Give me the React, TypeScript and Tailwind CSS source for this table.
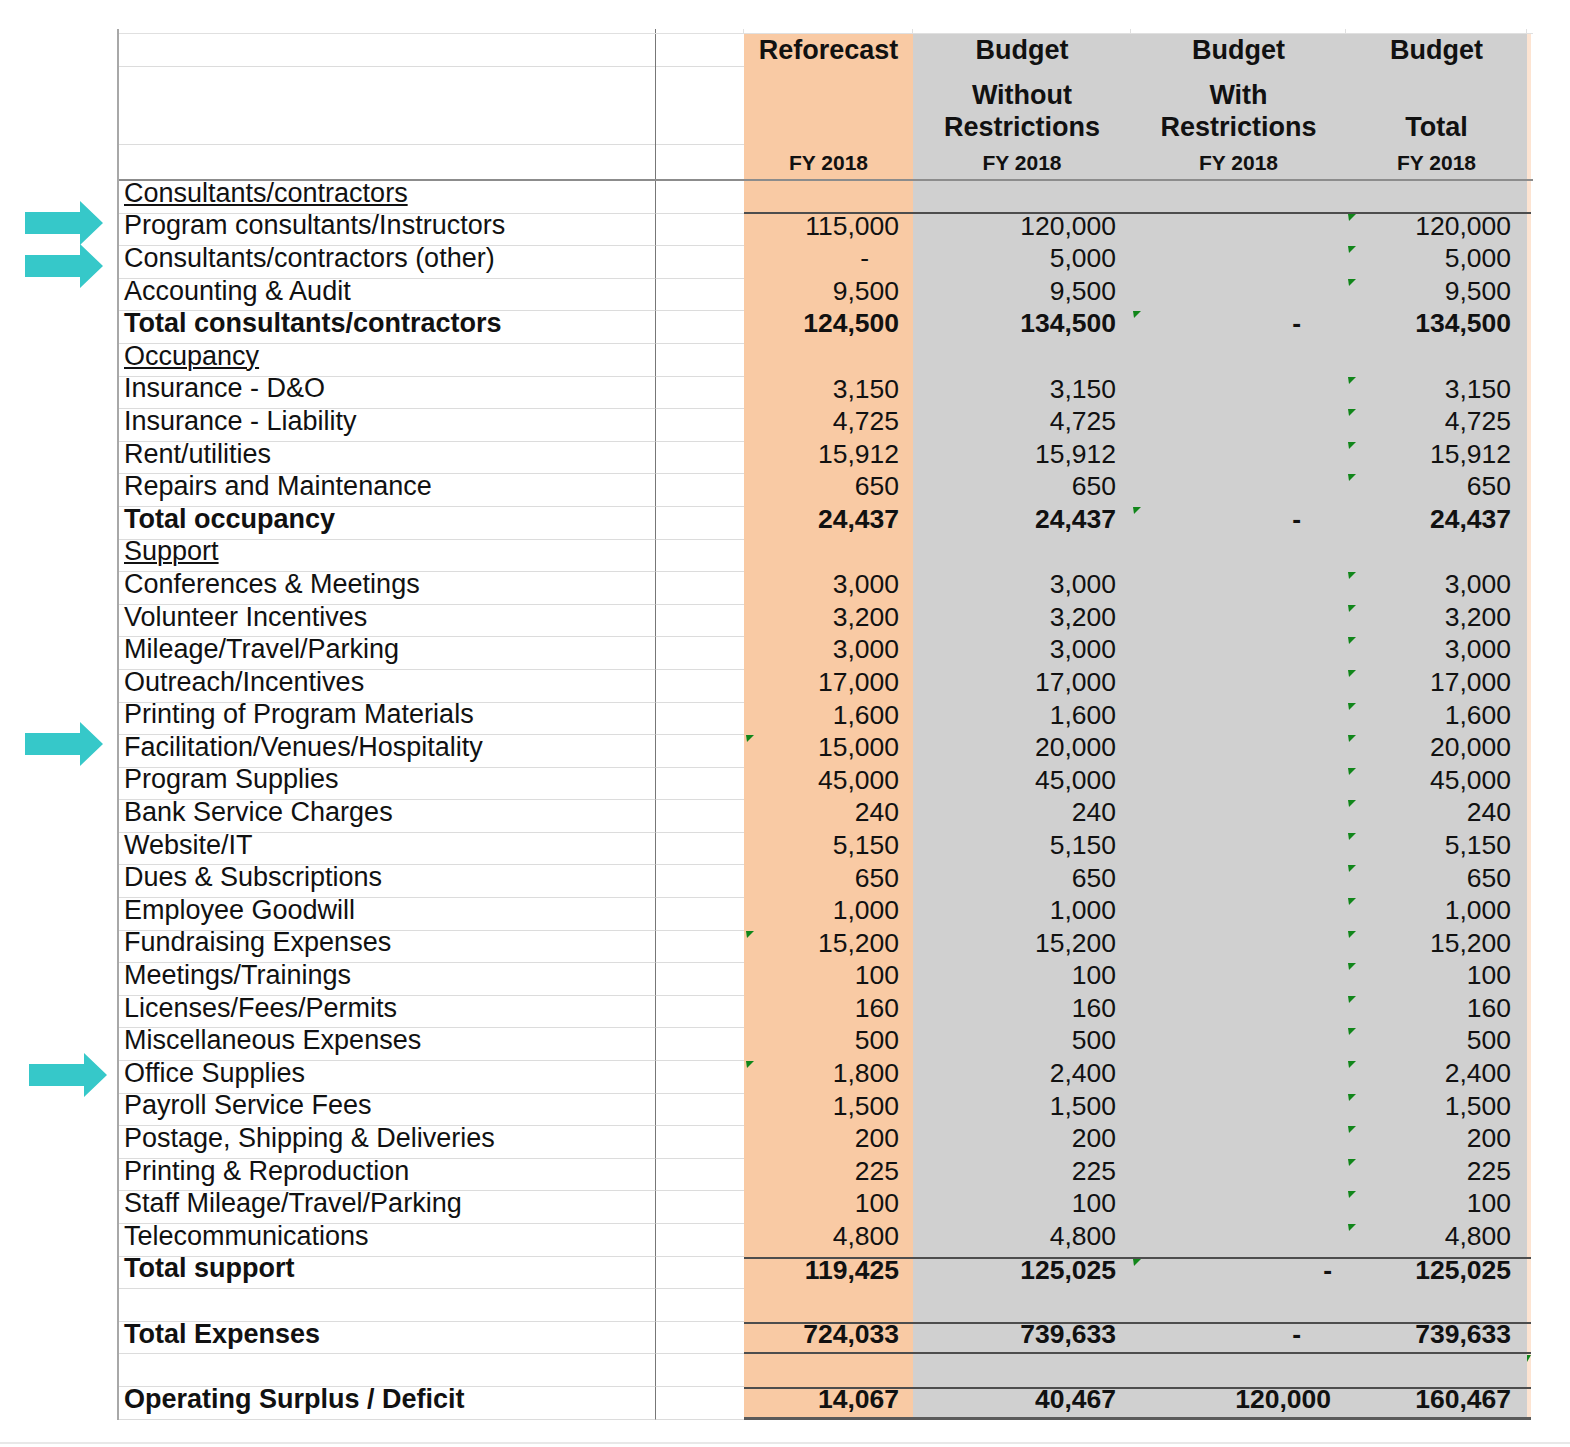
import React from "react";

type Row = {
  label?: string;
  kind?: "section" | "item" | "total" | "blank";
  r?: string;
  w?: string;
  d?: string;
  dPad?: string;
  t?: string;
  tri?: string[];
  topLine?: boolean;
  bottomLine?: boolean;
  bottomThick?: boolean;
};

const item = (label: string, r: string, w: string, t: string, tri: string[] = ["t"]): Row => ({
  label,
  kind: "item",
  r,
  w,
  t,
  tri,
});

const rows: Row[] = [
  { label: "Consultants/contractors", kind: "section", bottomLine: true },
  item("Program consultants/Instructors", "115,000", "120,000", "120,000"),
  item("Consultants/contractors (other)", "-", "5,000", "5,000"),
  item("Accounting & Audit", "9,500", "9,500", "9,500"),
  { label: "Total consultants/contractors", kind: "total", r: "124,500", w: "134,500", d: "-", dPad: "pr-[45px]", t: "134,500", tri: ["d"] },
  { label: "Occupancy", kind: "section" },
  item("Insurance - D&O", "3,150", "3,150", "3,150"),
  item("Insurance - Liability", "4,725", "4,725", "4,725"),
  item("Rent/utilities", "15,912", "15,912", "15,912"),
  item("Repairs and Maintenance", "650", "650", "650"),
  { label: "Total occupancy", kind: "total", r: "24,437", w: "24,437", d: "-", dPad: "pr-[45px]", t: "24,437", tri: ["d"] },
  { label: "Support", kind: "section" },
  item("Conferences & Meetings", "3,000", "3,000", "3,000"),
  item("Volunteer Incentives", "3,200", "3,200", "3,200"),
  item("Mileage/Travel/Parking", "3,000", "3,000", "3,000"),
  item("Outreach/Incentives", "17,000", "17,000", "17,000"),
  item("Printing of Program Materials", "1,600", "1,600", "1,600"),
  item("Facilitation/Venues/Hospitality", "15,000", "20,000", "20,000", ["r", "t"]),
  item("Program Supplies", "45,000", "45,000", "45,000"),
  item("Bank Service Charges", "240", "240", "240"),
  item("Website/IT", "5,150", "5,150", "5,150"),
  item("Dues & Subscriptions", "650", "650", "650"),
  item("Employee Goodwill", "1,000", "1,000", "1,000"),
  item("Fundraising Expenses", "15,200", "15,200", "15,200", ["r", "t"]),
  item("Meetings/Trainings", "100", "100", "100"),
  item("Licenses/Fees/Permits", "160", "160", "160"),
  item("Miscellaneous Expenses", "500", "500", "500"),
  item("Office Supplies", "1,800", "2,400", "2,400", ["r", "t"]),
  item("Payroll Service Fees", "1,500", "1,500", "1,500"),
  item("Postage, Shipping & Deliveries", "200", "200", "200"),
  item("Printing & Reproduction", "225", "225", "225"),
  item("Staff Mileage/Travel/Parking", "100", "100", "100"),
  item("Telecommunications", "4,800", "4,800", "4,800"),
  { label: "Total support", kind: "total", r: "119,425", w: "125,025", d: "-", dPad: "pr-[14px]", t: "125,025", tri: ["d"], topLine: true },
  { kind: "blank" },
  { label: "Total Expenses", kind: "total", r: "724,033", w: "739,633", d: "-", dPad: "pr-[45px]", t: "739,633", topLine: true, bottomLine: true },
  { kind: "blank", tri: ["s"] },
  { label: "Operating Surplus / Deficit", kind: "total", r: "14,067", w: "40,467", d: "120,000", dPad: "pr-[15px]", t: "160,467", topLine: true, bottomThick: true },
];

// little green corner marker, like the spreadsheet's error flag
const Flag = () => (
  <svg className="absolute left-[2px] top-0" width="8" height="7" viewBox="0 0 8 7">
    <polygon points="0,0 8,0 1,7" fill="#11861a" />
  </svg>
);

const Arrow = ({ className }: { className: string }) => (
  <svg className={`absolute ${className}`} width="78" height="44" viewBox="0 0 78 44">
    <polygon points="0,11 55,11 55,0 78,22 55,44 55,33 0,33" fill="#36c8c9" />
  </svg>
);

const Header = () => {
  const light = "border-b border-[#dcdcdc]";
  return (
    <div className="flex flex-col">
      {/* top ticks above the sheet */}
      <div className="flex h-[4px]">
        <div className="w-[537px] border-r border-[#777]" />
        <div className="w-[88px] border-r border-[#e0e0e0]" />
        <div className="w-[169px] border-r border-[#e0e0e0]" />
        <div className="w-[218px] border-r border-[#e0e0e0]" />
        <div className="w-[215px] border-r border-[#e0e0e0]" />
        <div className="w-[181px] border-r border-[#e0e0e0]" />
      </div>
      <div className="flex border-t border-[#e0e0e0] text-[27px]">
        <div className="w-[537px] border-r border-[#777] flex flex-col">
          <div className={`h-[33px] ${light}`} />
          <div className={`h-[78px] ${light}`} />
          <div className="h-[34px]" />
        </div>
        <div className="w-[88px] flex flex-col">
          <div className={`h-[33px] ${light}`} />
          <div className={`h-[78px] ${light}`} />
          <div className="h-[34px]" />
        </div>
        <div className="w-[169px] bg-[#f9caa4] flex flex-col items-center font-bold">
          <div className="h-[33px] flex items-center">Reforecast</div>
          <div className="h-[78px]" />
          <div className="h-[34px] flex items-center text-[21px]">FY 2018</div>
        </div>
        <div className="w-[218px] bg-[#d0d0d0] flex flex-col items-center font-bold">
          <div className="h-[33px] flex items-center">Budget</div>
          <div className="h-[78px] flex flex-col justify-end items-center pb-[2px] leading-[32px]">
            <span>Without</span>
            <span>Restrictions</span>
          </div>
          <div className="h-[34px] flex items-center text-[21px]">FY 2018</div>
        </div>
        <div className="w-[215px] bg-[#d0d0d0] flex flex-col items-center font-bold">
          <div className="h-[33px] flex items-center">Budget</div>
          <div className="h-[78px] flex flex-col justify-end items-center pb-[2px] leading-[32px]">
            <span>With</span>
            <span>Restrictions</span>
          </div>
          <div className="h-[34px] flex items-center text-[21px]">FY 2018</div>
        </div>
        <div className="w-[181px] bg-[#d0d0d0] flex flex-col items-center font-bold">
          <div className="h-[33px] flex items-center">Budget</div>
          <div className="h-[78px] flex flex-col justify-end items-center pb-[2px] leading-[32px]">
            <span>Total</span>
          </div>
          <div className="h-[34px] flex items-center text-[21px]">FY 2018</div>
        </div>
        <div className="w-[4px] bg-[#fde4d2]" />
      </div>
      <div className="h-[2px] bg-[#8c8c8c] w-[1414px]" />
    </div>
  );
};

const DataRow = ({ row }: { row: Row }) => {
  const bold = row.kind === "total" ? "font-bold" : "";
  const lines = [
    row.topLine ? "border-t-2 border-t-[#4d4d4d]" : "",
    row.bottomLine ? "border-b-2 border-b-[#4d4d4d]" : "",
    row.bottomThick ? "border-b-[3px] border-b-[#5a5a5a]" : "",
  ].join(" ");
  const tri = row.tri || [];
  const cell = "relative h-[32.6px] flex items-center justify-end pb-[8px]";
  return (
    <div className="flex">
      <div className="w-[537px] h-[32.6px] border-r border-[#777] border-b border-b-[#dcdcdc] flex items-center pl-[5px] pb-[7px] whitespace-nowrap text-[27px]">
        <span className={`${bold} ${row.kind === "section" ? "underline underline-offset-[2px] decoration-[1.5px]" : ""}`}>
          {row.label}
        </span>
      </div>
      <div className="w-[88px] h-[32.6px] border-b border-[#dcdcdc]" />
      <div className={`w-[169px] bg-[#f9caa4] pr-[14px] ${cell} ${lines} ${bold}`}>
        {tri.includes("r") && <Flag />}
        <span className={row.r === "-" ? "pr-[30px]" : ""}>{row.r}</span>
      </div>
      <div className={`w-[218px] bg-[#d0d0d0] pr-[15px] ${cell} ${lines} ${bold}`}>
        {row.w}
      </div>
      <div className={`w-[215px] bg-[#d0d0d0] ${row.dPad || "pr-[15px]"} ${cell} ${lines} ${bold}`}>
        {tri.includes("d") && <Flag />}
        {row.d}
      </div>
      <div className={`w-[181px] bg-[#d0d0d0] pr-[16px] ${cell} ${lines} ${bold}`}>
        {tri.includes("t") && <Flag />}
        {row.t}
      </div>
      <div className={`w-[4px] bg-[#fde4d2] relative h-[32.6px] overflow-hidden ${lines}`}>
        {tri.includes("s") && (
          <svg className="absolute left-0 top-[1px]" width="4" height="7" viewBox="0 0 4 7">
            <polygon points="0,0 4,0 0,7" fill="#11861a" />
          </svg>
        )}
      </div>
    </div>
  );
};

export default function App() {
  return (
    <div
      className="relative w-[1570px] h-[1447px] bg-white text-[#111] text-[26.5px] leading-none overflow-hidden"
      style={{ fontFamily: '"Liberation Sans", Arial, sans-serif' }}
    >
      <div className="pt-[29px] pl-[117px]">
        <div className="border-l-2 border-[#a8a8a8] w-fit">
          <Header />
          {rows.map((row, i) => (
            <DataRow key={i} row={row} />
          ))}
        </div>
      </div>

      {/* annotation arrows */}
      <Arrow className="left-[25px] top-[201px]" />
      <Arrow className="left-[25px] top-[244px]" />
      <Arrow className="left-[25px] top-[722px]" />
      <Arrow className="left-[29px] top-[1053px]" />

      <div className="absolute left-0 right-0 top-[1442px] h-[2px] bg-[#e8e8e8]" />
    </div>
  );
}
